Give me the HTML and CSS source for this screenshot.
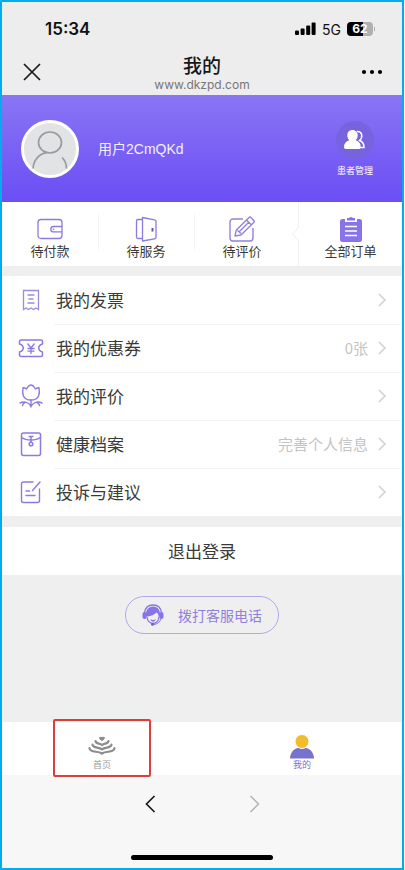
FILE: index.html
```html
<!DOCTYPE html>
<html lang="zh-CN">
<head>
<meta charset="utf-8">
<meta name="viewport" content="width=device-width, initial-scale=1">
<title>我的</title>
<link rel="stylesheet" href="styles.css">
</head>
<body>
<div class="screen">
  <div class="status">
    <span class="time">15:34</span>
    <div class="signals">
      <svg width="21" height="14" viewBox="0 0 21 14"><rect y="8.500" width="4" height="4.500" rx="1"/><rect x="5.600" y="6.500" width="4" height="6.500" rx="1"/><rect x="11.200" y="3.500" width="4" height="9.500" rx="1"/><rect x="16.600" y="0.500" width="4" height="12.500" rx="1"/></svg>
      <span class="network">5G</span>
      <span class="battery">62</span>
    </div>
  </div>
  <header class="nav">
    <button class="nav-button" aria-label="关闭"><svg width="18" height="18" viewBox="0 0 18 18"><path d="M1 1l16 16M17 1L1 17" fill="none" stroke="#171717" stroke-width="1.700"/></svg></button>
    <div class="heading"><h1>我的</h1><p>www.dkzpd.com</p></div>
    <button class="nav-button" aria-label="更多"><svg width="22" height="6" viewBox="0 0 22 6"><circle cx="3" cy="3" r="2.100"/><circle cx="11" cy="3" r="2.100"/><circle cx="19" cy="3" r="2.100"/></svg></button>
  </header>

  <section class="profile">
    <svg class="avatar" viewBox="0 0 58 58"><circle cx="29" cy="29" r="27.500" fill="#e2e3e5" stroke="#fff" stroke-width="3"/><g fill="none" stroke="#999b9e" stroke-width="1.700"><ellipse cx="29" cy="22.500" rx="11.500" ry="10.500"/><path d="M12 48.500c.5-8 6-15 14-15.800M41 37.500c3 3 4.500 6.500 4.500 11"/></g></svg>
    <span class="username">用户2CmQKd</span>
    <a class="patients" href="#patients">
      <span class="patients-icon"><svg width="24" height="22" viewBox="0 0 24 22"><path d="M14 2.500c5-.5 6.500 5.500 2.500 9 3 1 4.500 3 4.500 7h-4" fill="none" stroke="#fff" stroke-width="1.500"/><path d="M9.500 1c3.300 0 5.200 2.300 5.200 5.500 0 2-.9 3.700-2 4.800 3.300 1 5 3.200 5 6.700 0 1.400-.8 2-2 2H3c-1.300 0-2-.7-2-2 0-3.500 2-5.700 5.300-6.700-1.200-1.100-2-2.800-2-4.800C4.300 3.300 6.200 1 9.500 1z" fill="#fff"/></svg></span>
      <span>患者管理</span>
    </a>
  </section>

  <nav class="orders">
    <a href="#pay"><svg width="26" height="26" viewBox="0 0 26 26"><g fill="none" stroke="#8a7be0" stroke-width="1.300"><rect x="1" y="3.500" width="24" height="19" rx="3"/><path d="M25 10.500H16.500a2.700 2.700 0 0 0 0 5.400H25"/><path d="M16.500 12.500v1.500"/></g></svg><span>待付款</span></a>
    <a href="#service"><svg width="26" height="26" viewBox="0 0 26 26"><g fill="none" stroke="#8a7be0" stroke-width="1.300" stroke-linejoin="round"><path d="M9 22.500H5a1.500 1.500 0 0 1-1.500-1.500V5A1.500 1.500 0 0 1 5 3.500h4"/><path d="M9.500 1.500l12 2.300q1.500.3 1.500 1.500v16q0 1.300-1.500 1.500l-12 2.200z"/><path d="M19.500 12v3.500" stroke="#6254a8" stroke-width="2"/></g></svg><span>待服务</span></a>
    <a href="#review"><svg width="26" height="26" viewBox="0 0 26 26"><g fill="none" stroke="#9282de" stroke-width="1.400" stroke-linejoin="round"><path d="M14 3H4a3 3 0 0 0-3 3v16a3 3 0 0 0 3 3h17a3 3 0 0 0 3-3V12"/><path d="M6 20l1.200-5.800L20 1.500q1-.9 2.200.2l2.500 2.600q1 1.100 0 2.100L12 19zM17.500 4l5 5M8.500 14.500l3.500 3M20 6L9.700 16.200"/></g></svg><span>待评价</span></a>
    <a class="all-orders" href="#all"><svg class="notch" width="8" height="20" viewBox="0 0 8 20"><path d="M8 0v3L1.500 10 8 17v3" fill="#fff" stroke="#eee"/></svg><svg width="26" height="26" viewBox="0 0 26 26"><path d="M4.500 3H7v3h12V3h2.500A2.500 2.500 0 0 1 24 5.500v18a2.500 2.500 0 0 1-2.500 2.500h-17A2.500 2.500 0 0 1 2 23.500v-18A2.500 2.500 0 0 1 4.500 3z" fill="#8873e8"/><path d="M9 2h2q2-2 4 0h2v2.500H9z" fill="#8873e8"/><path d="M7 10.500h12M7 15h12M7 19.500h12" stroke="#fff" stroke-width="1.500"/></svg><span>全部订单</span></a>
  </nav>

  <ul class="menu">
    <li><a href="#invoice"><svg class="menu-icon" viewBox="0 0 26 26"><g fill="none" stroke="#9a8ce0" stroke-width="1.300"><path d="M5.500 22.500V3.500h15v19l-2.500-1.500-2.500 1.500-2.500-1.500-2.500 1.500L8 21z"/><path d="M9.500 8h7M10.500 12h5M9.500 16h7"/></g></svg><span class="label">我的发票</span><svg class="chevron" viewBox="0 0 8 14"><path d="M1 1l6 6-6 6"/></svg></a></li>
    <li><a href="#coupons"><svg class="menu-icon" viewBox="0 0 26 26"><g fill="none" stroke="#8b7be0" stroke-width="1.500" stroke-linejoin="round"><path d="M3 5h20q1.500 0 1.500 1.500V9c-5 1.500-5 6.500 0 8v3q0 1.500-1.500 1.500H3Q1.500 21.500 1.500 20v-3c5-1.500 5-6.500 0-8V6.500Q1.500 5 3 5z"/><path d="M9.500 8.500L13 13l3.500-4.500M13 13v6M9.500 13.500h7M9.500 16.200h7" stroke-width="1.300"/></g></svg><span class="label">我的优惠券</span><span class="value">0张</span><svg class="chevron" viewBox="0 0 8 14"><path d="M1 1l6 6-6 6"/></svg></a></li>
    <li><a href="#reviews"><svg class="menu-icon" viewBox="0 0 26 26"><g fill="none" stroke="#8b7be0" stroke-width="1.400" stroke-linejoin="round" stroke-linecap="round"><path d="M8.500 6C10 3.500 11.500 2 13 2s3 1.500 4.500 4q2-1.500 3.500-1.200c1 5.500.5 12.200-8 12.200S4 10.300 5 4.800Q6.500 4.500 8.500 6z"/><path d="M13 17v7M2 20c4-2 9-1 11 3.500C15 19 20 18 24 20M7 19.500c-1.500.5-2 1.500-2.500 3M19 19.500c1.500.5 2 1.500 2.500 3"/></g></svg><span class="label">我的评价</span><svg class="chevron" viewBox="0 0 8 14"><path d="M1 1l6 6-6 6"/></svg></a></li>
    <li><a href="#health"><svg class="menu-icon" viewBox="0 0 26 26"><g fill="none" stroke="#8b7be0" stroke-width="1.500"><rect x="3.500" y="2" width="19" height="22.500" rx="2"/><path d="M4 6.500c2 1.700 5 2.500 9 2.500s7-.8 9-2.500M10.500 5.500h5M13 5.500V11"/><circle cx="13" cy="13" r="1.800"/></g></svg><span class="label">健康档案</span><span class="value">完善个人信息</span><svg class="chevron" viewBox="0 0 8 14"><path d="M1 1l6 6-6 6"/></svg></a></li>
    <li><a href="#feedback"><svg class="menu-icon" viewBox="0 0 26 26"><g fill="none" stroke="#8b7be0" stroke-width="1.400" stroke-linecap="round"><path d="M15 3H5.500a2 2 0 0 0-2 2v16.500a2 2 0 0 0 2 2h14a2 2 0 0 0 2-2V10M22 3l-7.500 8.500M8 12h3.500M8 16.500h9"/></g></svg><span class="label">投诉与建议</span><svg class="chevron" viewBox="0 0 8 14"><path d="M1 1l6 6-6 6"/></svg></a></li>
  </ul>

  <button class="logout">退出登录</button>

  <div class="support">
    <button class="call"><svg width="22" height="22" viewBox="0 0 22 22"><rect x="0.500" y="8" width="4" height="7" rx="2" fill="#8873e8"/><rect x="17.500" y="8" width="4" height="7" rx="2" fill="#8873e8"/><path d="M2.500 9C3 3.500 6.500 1 11 1s8 2.500 8.500 8" fill="none" stroke="#8873e8" stroke-width="1.300"/><path d="M4 12.500C3.300 6 6.500 2.400 11 2.400S18.700 6 18 12.500l-1.500.5c.2-2.500-.5-3.500-2-4.500-2.500 2.500-5.500 3.500-9 4z" fill="#8873e8"/><path d="M5 13c.5 4 3 6.300 6 6.300s5.500-2.300 6-6.300" fill="none" stroke="#8873e8" stroke-width="1.300"/><path d="M8 15q3 1.800 6 0-1 2.700-3 2.700T8 15z" fill="#8873e8"/><path d="M19 14.500c-1 3.500-3.500 5.800-7.500 6" fill="none" stroke="#8873e8"/><circle cx="10.500" cy="20.300" r="1.500" fill="#6f5fc0"/></svg><span>拨打客服电话</span></button>
  </div>

  <nav class="tabs">
    <a class="tab" href="#home"><span class="highlight"></span><svg width="28" height="26" viewBox="0 0 28 26"><path d="M11.500 4.500q1.500-.8 2.500.3 1-1.100 2.500-.3Q16.500 6.500 14 7.500 11.500 6.500 11.500 4.500z" fill="#8d8d8d" stroke="#8d8d8d"/><path d="M7.500 8c.5 3.300 4 2 6.500 4 2.500-2 6-.7 6.500-4M4.500 11.500c.5 4 6 2.200 9.500 4.800 3.500-2.600 9-.8 9.500-4.800M1.500 15.200c.5 5 8.500 2.300 12.500 5.300 4-3 12-.3 12.500-5.300" fill="none" stroke="#8d8d8d" stroke-width="2.200" stroke-linecap="round"/></svg><span>首页</span></a>
    <a class="tab active" href="#me"><svg width="28" height="26" viewBox="0 0 28 26"><path d="M2 25.500c.3-6.500 4-11 12-11s11.700 4.500 12 11z" fill="#7772cb"/><circle cx="14" cy="8.500" r="7" fill="#f2bd2c" stroke="#fff"/></svg><span>我的</span></a>
  </nav>

  <footer class="browser">
    <div class="history">
      <button aria-label="后退"><svg width="11" height="18" viewBox="0 0 11 18"><path d="M9.500 1l-8 8 8 8" fill="none" stroke="#1b1b1b" stroke-width="1.700"/></svg></button>
      <button aria-label="前进"><svg width="11" height="18" viewBox="0 0 11 18"><path d="M1.500 1l8 8-8 8" fill="none" stroke="#b2b2b2" stroke-width="1.500"/></svg></button>
    </div>
    <div class="home-bar"></div>
  </footer>
</div>
</body>
</html>
```
FILE: styles.css
```css
* { box-sizing: border-box; }
body {
  margin: 0;
  background: #fff;
  font-family: "Noto Sans CJK SC", sans-serif;
  color: #3a3a3a;
}
a { color: inherit; text-decoration: none; }
button {
  padding: 0;
  border: 0;
  background: none;
  font: inherit;
  color: inherit;
}
svg { display: block; flex: none; }
.screen {
  display: flex;
  flex-direction: column;
  min-height: 100vh;
  margin-right: 1px;
  border: 2px solid #00aeef;
  background: #efefef;
}

.status {
  display: flex;
  align-items: center;
  justify-content: space-between;
  height: 52px;
  padding: 2px 29px 0 43px;
  background: #ededed;
  color: #111;
  font-family: Inter, sans-serif;
}
.time { font-size: 17px; font-weight: 600; }
.signals { display: flex; align-items: center; gap: 6px; }
.network { font-size: 14px; }
.battery {
  position: relative;
  width: 26px;
  border-radius: 4px;
  background: linear-gradient(90deg, #000 62%, #b0b0b0 62%);
  color: #fff;
  font-size: 12px;
  font-weight: 700;
  line-height: 14px;
  text-align: center;
}
.battery::after {
  content: "";
  position: absolute;
  top: 5px;
  right: -2px;
  width: 1px;
  height: 4px;
  background: #b0b0b0;
}

.nav {
  display: grid;
  grid-template-columns: 60px 1fr 60px;
  height: 41px;
  background: #ededed;
}
.nav-button { display: flex; align-items: center; justify-content: center; height: 36px; }
.heading { text-align: center; }
.heading h1 {
  margin: 0;
  color: #171717;
  font-family: "Liberation Sans", "Noto Sans CJK SC", sans-serif;
  font-size: 19px;
  font-weight: 500;
  line-height: 25px;
}
.heading p {
  margin: 0;
  color: #777;
  font-family: Inter, sans-serif;
  font-size: 12px;
  line-height: 12px;
}

.profile {
  display: flex;
  align-items: center;
  height: 107px;
  padding: 0 19px;
  background: linear-gradient(#8a75f4, #6b4ef5);
  color: #fff;
}
.avatar { width: 58px; height: 58px; }
.username {
  flex: 1;
  margin-left: 19px;
  color: #f3f0ff;
  font-family: "Liberation Sans", "Noto Sans CJK SC", sans-serif;
  font-size: 14px;
  line-height: 20px;
}
.patients {
  display: flex;
  flex-direction: column;
  align-items: center;
  gap: 6px;
  width: 56px;
  font-size: 9px;
  line-height: 12px;
}
.patients-icon {
  display: flex;
  align-items: center;
  justify-content: center;
  width: 38px;
  height: 38px;
  border-radius: 50%;
  background: #7763de;
}

.orders {
  display: grid;
  grid-template-columns: 12fr 12fr 13fr 13fr;
  height: 64px;
  background: #fff;
  font-size: 13px;
  line-height: 18px;
}
.orders a {
  position: relative;
  display: flex;
  flex-direction: column;
  align-items: center;
  padding-top: 14px;
}
.orders a + a { background: linear-gradient(#f5f5f5, #f5f5f5) 0 12px / 1px 36px no-repeat; }
.orders a:nth-child(3) { padding-right: 8px; }
.orders .all-orders { background: none; border-left: 1px solid #f2f2f2; }
.notch { position: absolute; top: 22px; left: -8px; }

.menu { margin: 10px 0 0; padding: 0; background: #fff; list-style: none; }
.menu a { position: relative; display: flex; align-items: center; height: 48px; padding: 0 16px; }
.menu li + li a::before {
  content: "";
  position: absolute;
  top: 0;
  right: 0;
  left: 52px;
  height: 1px;
  background: #f3f3f3;
}
.menu-icon { width: 26px; height: 26px; }
.label { flex: 1; margin-left: 12px; font-size: 17px; line-height: 24px; }
.value { margin-right: 10px; color: #c4c4c4; font-size: 15px; line-height: 24px; }
.chevron { width: 8px; height: 14px; fill: none; stroke: #d0d0d0; stroke-width: 1.5; }

.logout { height: 48px; margin-top: 11px; background: #fff; font-size: 17px; line-height: 24px; }
.support { flex: 1; padding-top: 21px; }
.call {
  display: flex;
  align-items: center;
  gap: 14px;
  height: 38px;
  margin: 0 auto;
  padding: 0 16px;
  border: 1px solid #b3a8ea;
  border-radius: 19px;
  color: #8f80dc;
  font-size: 14px;
  line-height: 20px;
}

.tabs {
  display: grid;
  grid-template-columns: 1fr 1fr;
  height: 53px;
  background: #fff;
  color: #999;
  font-size: 9px;
  line-height: 12px;
}
.tab {
  position: relative;
  display: flex;
  flex-direction: column;
  align-items: center;
  padding-top: 11px;
}
.active { color: #7772cb; }
.highlight {
  position: absolute;
  top: -3px;
  bottom: -2px;
  left: 50%;
  width: 98px;
  border: 2px solid #dc3f3a;
  border-radius: 2px;
  transform: translateX(-50%);
}

.browser {
  display: flex;
  flex-direction: column;
  align-items: center;
  justify-content: space-between;
  height: 93px;
  padding: 20px 0 8px;
  background: #f7f7f7;
}
.history { display: flex; gap: 93px; }
.home-bar { width: 142px; height: 5px; border-radius: 3px; background: #000; }
```
